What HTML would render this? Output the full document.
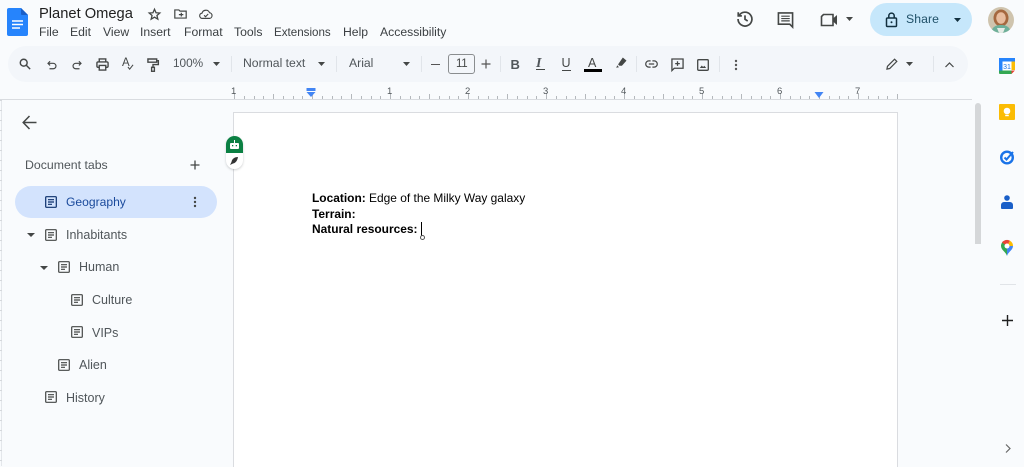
<!DOCTYPE html>
<html><head><meta charset="utf-8"><style>
html,body{margin:0;padding:0}
body{width:1024px;height:466px;overflow:hidden;background:#f9fbfd;position:relative;font-family:"Liberation Sans",sans-serif;color:#444746}
.t{position:absolute;white-space:nowrap;line-height:1}
svg{position:absolute;overflow:visible}
.m{top:26px;font-size:12.2px;color:#3c4043}
.b{top:57px;font-size:12.2px;color:#50565a}
.r{top:87px;font-size:9.5px;color:#50565a}
.n{font-size:12.5px;color:#50565a}
.d{position:absolute;left:312px;font-size:11.95px;color:#000;white-space:nowrap;line-height:15.5px}
</style></head><body>

<!-- toolbar pill -->
<div style="position:absolute;left:8px;top:46px;width:960px;height:36px;border-radius:18px;background:#f3f6fa"></div>

<!-- docs logo -->
<svg style="left:7px;top:8px" width="21" height="28" viewBox="0 0 21 28"><path d="M2 0H14L21 7V26a2 2 0 0 1-2 2H2a2 2 0 0 1-2-2V2a2 2 0 0 1 2-2z" fill="#2684fc"/><path d="M14 0L21 7H15a1 1 0 0 1-1-1z" fill="#1a5fc8"/><path d="M5 13h11M5 16.500h11M5 20h8" stroke="#fff" stroke-width="1.600"/></svg>

<div class="t" style="left:39px;top:7px;font-size:14.7px;color:#1f1f1f">Planet Omega</div>

<!-- star / move / cloud -->
<svg style="left:148px;top:8px" width="13" height="13" viewBox="0 0 16 16" fill="none" stroke="#444746" stroke-width="1.600"><path d="M8 1.500l1.900 4.300 4.600.4-3.500 3 1.100 4.500L8 11.300l-4.100 2.400 1.100-4.500-3.500-3 4.600-.4z"/></svg>
<svg style="left:174px;top:9px" width="13" height="10" viewBox="0 0 16 12" fill="none" stroke="#444746" stroke-width="1.500"><path d="M1 1h5l1.500 1.500H15V11H1z"/><path d="M6 6.800h5.500M9 4.500v4.600"/></svg>
<svg style="left:199px;top:8px" width="14" height="12" viewBox="0 0 16 13" fill="none" stroke="#444746" stroke-width="1.300"><path d="M4 11.500a3 3 0 0 1-.5-6A4.500 4.500 0 0 1 12 5a3.300 3.300 0 0 1 .3 6.500z"/><path d="M5.800 8l1.700 1.600L10.500 6.500"/></svg>

<!-- menu -->
<div class="t m" style="left:39px">File</div>
<div class="t m" style="left:70px">Edit</div>
<div class="t m" style="left:103px">View</div>
<div class="t m" style="left:140px">Insert</div>
<div class="t m" style="left:184px">Format</div>
<div class="t m" style="left:234px">Tools</div>
<div class="t m" style="left:274px;font-size:11.6px;top:26.5px">Extensions</div>
<div class="t m" style="left:343px">Help</div>
<div class="t m" style="left:380px">Accessibility</div>

<!-- top right -->
<svg style="left:736px;top:10px" width="18" height="18" viewBox="0 0 20 20" fill="none" stroke="#444746" stroke-width="1.900"><path d="M3.500 6A7.700 7.700 0 1 1 2.300 10"/><path d="M2.500 2.500V6.500H6.500"/><path d="M10 6v4.300l3 2"/></svg>
<svg style="left:777px;top:11px" width="17" height="17" viewBox="0 0 18 18" fill="none" stroke="#444746" stroke-width="1.700"><path d="M1.500 2h15v15l-3-3h-12z"/><path d="M4.500 5.500h9M4.500 8h9M4.500 10.500h9" stroke-width="1.300"/></svg>
<svg style="left:820px;top:13px" width="18" height="14" viewBox="0 0 18 14"><path d="M3.500 1.500H13V12.500H1.500V3.500z" fill="none" stroke="#444746" stroke-width="1.600"/><path d="M13 5.500L17 2V12L13 8.500z" fill="#444746"/></svg>
<svg style="left:846px;top:17px" width="7" height="4"><path d="M0 0h7L3.500 4z" fill="#444746"/></svg>

<div style="position:absolute;left:870px;top:3px;width:102px;height:33px;border-radius:17px;background:#c6e7fb"></div>
<svg style="left:885px;top:12px" width="13" height="16" viewBox="0 0 13 16" fill="none" stroke="#12303f" stroke-width="1.500"><rect x="1.500" y="6" width="10" height="8.500" rx="1"/><path d="M3.800 6V3.800a2.700 2.700 0 0 1 5.400 0V6"/><circle cx="6.500" cy="10.200" r="1" fill="#12303f" stroke="none"/></svg>
<div class="t" style="left:906px;top:13px;font-size:12.2px;color:#1f5068;letter-spacing:.1px">Share</div>
<svg style="left:954px;top:18px" width="7" height="4"><path d="M0 0h7L3.500 4z" fill="#12303f"/></svg>

<!-- avatar -->
<svg style="left:988px;top:7px" width="26" height="26" viewBox="0 0 26 26"><defs><clipPath id="c"><circle cx="13" cy="13" r="13"/></clipPath></defs><g clip-path="url(#c)"><rect width="26" height="26" fill="#cfc4ae"/><ellipse cx="13" cy="11" rx="7.500" ry="8.500" fill="#a5683f"/><ellipse cx="13" cy="11" rx="4.800" ry="5.800" fill="#e8bd9f"/><path d="M3 26c1-7 6-8 10-8s9 1 10 8z" fill="#6fb09a"/><path d="M9 21h8l-2 5h-4z" fill="#e6ece6"/></g></svg>

<!-- toolbar icons -->
<svg style="left:19px;top:58px" width="12" height="12" viewBox="0 0 14 14" fill="none" stroke="#444746" stroke-width="1.700"><circle cx="5.500" cy="5.500" r="4"/><path d="M8.500 8.500L13 13"/></svg>
<svg style="left:47px;top:60px" width="10" height="10" viewBox="0 0 12 12" fill="none" stroke="#444746" stroke-width="1.400"><path d="M1.500 4h6a3 3 0 0 1 0 6.500H3"/><path d="M3.700 1.500L1.200 4l2.500 2.500"/></svg>
<svg style="left:72px;top:60px" width="10" height="10" viewBox="0 0 12 12" fill="none" stroke="#444746" stroke-width="1.400"><path d="M10.500 4h-6a3 3 0 0 0 0 6.500H9"/><path d="M8.300 1.500L10.800 4 8.300 6.500"/></svg>
<svg style="left:96px;top:58px" width="13" height="13" viewBox="0 0 14 14" fill="none" stroke="#444746" stroke-width="1.500"><path d="M3.500 4V1h7v3"/><rect x="1" y="4.200" width="12" height="5.800" rx="1.200"/><path d="M3.500 8h7v5h-7z" fill="#f3f6fa"/></svg>
<div class="t" style="left:122px;top:58px;font-size:11.5px;color:#444746">A</div>
<svg style="left:127px;top:64px" width="7" height="6" viewBox="0 0 8 7" fill="none" stroke="#444746" stroke-width="1.200"><path d="M1 3.500L3 6 7 1"/></svg>
<svg style="left:147px;top:58px" width="12" height="14" viewBox="0 0 13 15" fill="none" stroke="#444746" stroke-width="1.500"><path d="M1 1h9.500v3.500H1z"/><path d="M10.500 2.800H12.300V7H6.500v3"/><rect x="5" y="10" width="3" height="4.300"/></svg>
<div class="t b" style="left:173px;font-size:11.8px;top:58px">100%</div>
<svg style="left:213px;top:62px" width="7" height="4"><path d="M0 0h7L3.500 4z" fill="#444746"/></svg>
<div style="position:absolute;left:231px;top:56px;width:1px;height:16px;background:#e1e5ea"></div>
<div class="t b" style="left:243px">Normal text</div>
<svg style="left:318px;top:62px" width="7" height="4"><path d="M0 0h7L3.500 4z" fill="#444746"/></svg>
<div style="position:absolute;left:336px;top:56px;width:1px;height:16px;background:#e1e5ea"></div>
<div class="t b" style="left:349px">Arial</div>
<svg style="left:403px;top:62px" width="7" height="4"><path d="M0 0h7L3.500 4z" fill="#444746"/></svg>
<div style="position:absolute;left:421px;top:56px;width:1px;height:16px;background:#e1e5ea"></div>
<div style="position:absolute;left:431px;top:63.500px;width:9px;height:1px;background:#555"></div>
<div style="position:absolute;left:448px;top:54px;width:25px;height:18px;border:1px solid #8a8d8f;border-radius:3px"></div>
<div class="t" style="left:456px;top:59px;font-size:11.5px;color:#444746;letter-spacing:-.3px">11</div>
<svg style="left:481px;top:59px" width="10" height="10"><path d="M5 .5v9M.5 5h9" stroke="#555" stroke-width="1.200"/></svg>
<div style="position:absolute;left:500px;top:56px;width:1px;height:16px;background:#e1e5ea"></div>
<div class="t" style="left:510.500px;top:58px;font-size:13px;font-weight:700;color:#50565a">B</div>
<div class="t" style="left:536px;top:57px;font-size:14px;font-weight:700;font-style:italic;font-family:'Liberation Serif',serif;color:#50565a">I</div>
<div style="position:absolute;left:536px;top:69px;width:9px;height:1px;background:#444746"></div>
<div class="t" style="left:561.500px;top:57px;font-size:12.500px;color:#444746">U</div>
<div style="position:absolute;left:562px;top:70px;width:9px;height:1.200px;background:#444746"></div>
<div class="t" style="left:588px;top:57px;font-size:12.500px;color:#444746">A</div>
<div style="position:absolute;left:584px;top:69px;width:18px;height:3px;background:#000"></div>
<svg style="left:615px;top:57px" width="12" height="11" viewBox="0 0 13 12"><path d="M8.500 .5l4 3.500-5 5.500H4.800L3.300 8z" fill="#444746"/><path d="M3 9L1 11.500h3z" fill="#444746"/></svg>
<div style="position:absolute;left:636px;top:56px;width:1px;height:16px;background:#e1e5ea"></div>
<svg style="left:645px;top:60px" width="13" height="8" viewBox="0 0 14 9" fill="none" stroke="#444746" stroke-width="1.400"><path d="M6 1H4a3.500 3.500 0 0 0 0 7h2M8 1h2a3.500 3.500 0 0 1 0 7H8M4 4.500h6"/></svg>
<svg style="left:671px;top:58px" width="13" height="14" viewBox="0 0 14 15" fill="none" stroke="#444746" stroke-width="1.400"><path d="M1 1h12v10H3.500L1 13.500z"/><path d="M7 3.500v5M4.500 6h5"/></svg>
<svg style="left:697px;top:59px" width="12" height="12" viewBox="0 0 12 12"><rect x=".7" y=".7" width="10.600" height="10.600" rx="1" fill="none" stroke="#444746" stroke-width="1.300"/><path d="M2.800 9l2-2.500 1.300 1.500 1.200-1.200L9.200 9z" fill="#444746"/></svg>
<div style="position:absolute;left:719px;top:56px;width:1px;height:16px;background:#e1e5ea"></div>
<svg style="left:733.500px;top:58.500px" width="4" height="12"><circle cx="2" cy="2" r="1.200" fill="#555"/><circle cx="2" cy="6" r="1.200" fill="#555"/><circle cx="2" cy="10" r="1.200" fill="#555"/></svg>
<svg style="left:886px;top:58px" width="12" height="12" viewBox="0 0 13 13" fill="none" stroke="#444746" stroke-width="1.300"><path d="M1 12l.6-3L9.300 1.300l2.400 2.400L4 11.400z"/></svg>
<svg style="left:906px;top:62px" width="7" height="4"><path d="M0 0h7L3.500 4z" fill="#444746"/></svg>
<div style="position:absolute;left:933px;top:56px;width:1px;height:16px;background:#e1e5ea"></div>
<svg style="left:945px;top:62px" width="9" height="6" fill="none" stroke="#444746" stroke-width="1.200"><path d="M.5 5L4.500 1l4 4"/></svg>

<!-- ruler -->
<div style="position:absolute;left:0;top:99px;width:972px;height:1px;background:#d9dce0"></div>
<svg style="left:234px;top:93px" width="664" height="7" shape-rendering="crispEdges"><defs><pattern id="p" width="78" height="7" patternUnits="userSpaceOnUse"><path d="M0.500 0v6M10.500 3v3M20.500 3v3M29.500 3v3M39.500 1v5M49.500 3v3M59.500 3v3M68.500 3v3" stroke="#b4b8bc" stroke-width="1" fill="none"/></pattern></defs><rect width="664" height="6" fill="url(#p)"/></svg>
<div class="t r" style="left:231px">1</div>
<div class="t r" style="left:387px">1</div>
<div class="t r" style="left:465px">2</div>
<div class="t r" style="left:543px">3</div>
<div class="t r" style="left:621px">4</div>
<div class="t r" style="left:699px">5</div>
<div class="t r" style="left:777px">6</div>
<div class="t r" style="left:855px">7</div>
<svg style="left:306px;top:88px" width="10" height="9"><path d="M.5 0h9v3H.5z" fill="#4285f4"/><path d="M.5 4h9L5 9z" fill="#4285f4"/></svg>
<svg style="left:814px;top:92px" width="10" height="6"><path d="M.5 0h9L5 6z" fill="#4285f4"/></svg>

<!-- left edge -->
<div style="position:absolute;left:1px;top:100px;width:1px;height:366px;background:#e4e7eb"></div>
<svg style="left:0;top:100px" width="2" height="366"><defs><pattern id="v" width="2" height="10" patternUnits="userSpaceOnUse"><rect width="2" height="1" fill="#d5d8dc"/></pattern></defs><rect width="2" height="366" fill="url(#v)"/></svg>

<!-- page -->
<div style="position:absolute;left:233px;top:112px;width:663px;height:354px;background:#fff;border:1px solid #dadce0;border-bottom:none"></div>
<div class="d" style="top:191px"><b>Location:</b> Edge of the Milky Way galaxy</div>
<div class="d" style="top:207px"><b>Terrain:</b></div>
<div class="d" style="top:222px"><b>Natural resources:</b></div>
<div style="position:absolute;left:421px;top:222px;width:1px;height:14px;background:#000"></div>
<div style="position:absolute;left:419.500px;top:235px;width:3px;height:3px;border:.8px solid #555;border-radius:50%"></div>

<!-- sidebar -->
<svg style="left:22px;top:115px" width="15" height="15" viewBox="0 0 15 15" fill="none" stroke="#444746" stroke-width="1.500"><path d="M14.500 7.500H1.500M7.500 1L1.200 7.500 7.500 14"/></svg>
<div class="t n" style="left:25px;top:159px;font-size:12.3px">Document tabs</div>
<svg style="left:190px;top:160px" width="10" height="10"><path d="M5 .5v9M.5 5h9" stroke="#444746" stroke-width="1.300"/></svg>
<div style="position:absolute;left:15px;top:186px;width:202px;height:32px;border-radius:16px;background:#d3e3fd"></div>

<svg width="0" height="0"><defs><g id="i" fill="none" stroke-width="1.200"><rect x=".7" y=".7" width="10.600" height="10.600" rx=".8"/><path d="M3 3.700h6M3 6h6M3 8.300h4"/></g></defs></svg>
<svg style="left:45px;top:196px" width="12" height="12" stroke="#0b2f6b"><use href="#i"/></svg>
<div class="t n" style="left:66px;top:196px;color:#1a4a9c;font-size:12.1px">Geography</div>
<svg style="left:193px;top:196px" width="4" height="12"><circle cx="2" cy="2" r="1.200" fill="#444746"/><circle cx="2" cy="6" r="1.200" fill="#444746"/><circle cx="2" cy="10" r="1.200" fill="#444746"/></svg>

<svg style="left:27px;top:233px" width="8" height="4"><path d="M0 0h8L4 4z" fill="#444746"/></svg>
<svg style="left:45px;top:229px" width="12" height="12" stroke="#444746"><use href="#i"/></svg>
<div class="t n" style="left:66px;top:228.500px">Inhabitants</div>

<svg style="left:40px;top:266px" width="8" height="4"><path d="M0 0h8L4 4z" fill="#444746"/></svg>
<svg style="left:58px;top:261px" width="12" height="12" stroke="#444746"><use href="#i"/></svg>
<div class="t n" style="left:79px;top:261px">Human</div>

<svg style="left:71px;top:294px" width="12" height="12" stroke="#444746"><use href="#i"/></svg>
<div class="t n" style="left:92px;top:294px">Culture</div>

<svg style="left:71px;top:326px" width="12" height="12" stroke="#444746"><use href="#i"/></svg>
<div class="t n" style="left:92px;top:326.500px">VIPs</div>

<svg style="left:58px;top:359px" width="12" height="12" stroke="#444746"><use href="#i"/></svg>
<div class="t n" style="left:79px;top:359px">Alien</div>

<svg style="left:45px;top:391px" width="12" height="12" stroke="#444746"><use href="#i"/></svg>
<div class="t n" style="left:66px;top:391.500px">History</div>

<!-- green widget -->
<div style="position:absolute;left:226px;top:136px;width:17px;height:33px;border-radius:9px;background:#fff;box-shadow:0 1px 2px rgba(60,64,67,.25);overflow:hidden">
<div style="height:17px;background:#0b8043"></div></div>
<svg style="left:229px;top:140px" width="11" height="9"><rect x="1" y="3" width="9" height="6" rx="1" fill="#fff"/><rect x="5" y="0" width="1" height="3" fill="#fff"/><rect x="3" y="5" width="1.300" height="1.300" fill="#0b8043"/><rect x="6.700" y="5" width="1.300" height="1.300" fill="#0b8043"/></svg>
<svg style="left:229px;top:156px" width="10" height="10" viewBox="0 0 10 10"><path d="M9 1C6 1 3 2.500 2.500 6L1 9l3-1.500C7 7 8.500 4 9 1z" fill="#333"/></svg>

<!-- scrollbar -->
<div style="position:absolute;left:975px;top:103px;width:6px;height:141px;background:#d5d7d9;border-radius:3px 3px 0 0"></div>

<!-- side panel -->
<svg style="left:999px;top:58px" width="16" height="16" viewBox="0 0 16 16"><rect width="16" height="16" rx="1" fill="#fff"/><path d="M0 0H16V3.500H3.500V12.500H0z" fill="#2684fc"/><path d="M12.500 3.500H16V12L12.500 12z" fill="#fbbc04"/><path d="M0 12.500H12.500V16H1a1 1 0 0 1-1-1z" fill="#34a853"/><path d="M12.500 12.500H16L12.500 16z" fill="#ea4335"/><text x="8" y="10.800" font-size="7" font-family="Liberation Sans" fill="#1a73e8" text-anchor="middle">31</text></svg>
<svg style="left:999px;top:104px" width="16" height="16" viewBox="0 0 16 16"><rect width="16" height="16" rx="1" fill="#fbbc04"/><circle cx="8" cy="7" r="3.300" fill="#fff"/><rect x="6.200" y="10.800" width="3.600" height="1.400" fill="#fff"/></svg>
<svg style="left:999px;top:149px" width="16" height="16" viewBox="0 0 16 16" fill="none"><circle cx="8" cy="8.500" r="5.800" stroke="#1a73e8" stroke-width="2.400"/><path d="M5.500 8.500l2 2L14 3" stroke="#1a73e8" stroke-width="2"/></svg>
<svg style="left:1001px;top:195px" width="12" height="15" viewBox="0 0 12 15"><circle cx="6" cy="3" r="2.800" fill="#1a5fc8"/><path d="M0 13v-3a3 3 0 0 1 3-3h6a3 3 0 0 1 3 3v3a1 1 0 0 1-1 1H1a1 1 0 0 1-1-1z" fill="#1a5fc8"/></svg>
<svg style="left:1001px;top:240px" width="12" height="16" viewBox="0 0 12 16"><path d="M6 16C5 12 0 10 0 6a6 6 0 0 1 6-6z" fill="#34a853"/><path d="M6 16C7 12 12 10 12 6H6z" fill="#4285f4"/><path d="M1 2.500A6 6 0 0 1 9 .8L6 6z" fill="#ea4335"/><path d="M9 .8A6 6 0 0 1 12 6H6z" fill="#fbbc04"/><circle cx="6" cy="6" r="2.500" fill="#fff"/></svg>
<div style="position:absolute;left:1000px;top:284px;width:16px;height:1px;background:#e1e4e8"></div>
<svg style="left:1002px;top:315px" width="11" height="11"><path d="M5.500 0v11M0 5.500h11" stroke="#1f1f1f" stroke-width="1.400"/></svg>
<svg style="left:1005px;top:444px" width="6" height="9" fill="none" stroke="#666" stroke-width="1.200"><path d="M1 .5L5 4.500 1 8.500"/></svg>

</body></html>
